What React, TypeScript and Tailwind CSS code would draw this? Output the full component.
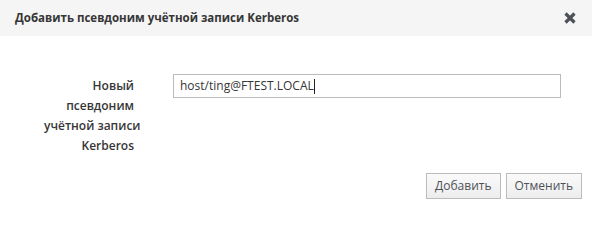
export default function App() {
  return (
    <div className="w-[592px] h-[208px] bg-white font-['Open_Sans',sans-serif] text-[#363636]">
      {/* header */}
      <div className="h-[36px] bg-[#f5f5f5] flex items-center justify-between pl-[15px] pr-[16px]">
        <h4 className="text-[11.5px] font-bold leading-none">
          Добавить псевдоним учётной записи Kerberos
        </h4>
        <button className="text-[#4d5258]">
          <svg width="12" height="12" viewBox="0 0 12 12">
            <path d="M1.5 1.5L10.5 10.5M10.5 1.5L1.5 10.5" stroke="currentColor" strokeWidth="3.2" />
          </svg>
        </button>
      </div>

      {/* form */}
      <div className="flex pt-[38px]">
        <label className="shrink-0 ml-[44px] w-[90px] text-right text-[12px] font-semibold leading-[20px] pt-[2px] whitespace-nowrap">
          Новый
          <br />
          псевдоним
          <br />
          учётной записи
          <br />
          Kerberos
        </label>
        <div className="shrink-0 ml-[39px] w-[388px] h-[24px] border border-[#bbb] flex items-center pl-[6px] text-[12px]">
          <span>host/ting@FTEST.LOCAL</span>
          <span className="inline-block w-px h-[15px] bg-[#222]" />
        </div>
      </div>

      {/* footer */}
      <div className="flex justify-end gap-[5px] pr-[10px] mt-[17px]">
        <button className="h-[26px] px-[8px] text-[12px] leading-[20px] text-[#4d5258] border border-[#bbb] bg-gradient-to-b from-[#fafafa] to-[#ededed]">
          Добавить
        </button>
        <button className="h-[26px] px-[8px] text-[12px] leading-[20px] text-[#4d5258] border border-[#bbb] bg-gradient-to-b from-[#fafafa] to-[#ededed]">
          Отменить
        </button>
      </div>
    </div>
  );
}
